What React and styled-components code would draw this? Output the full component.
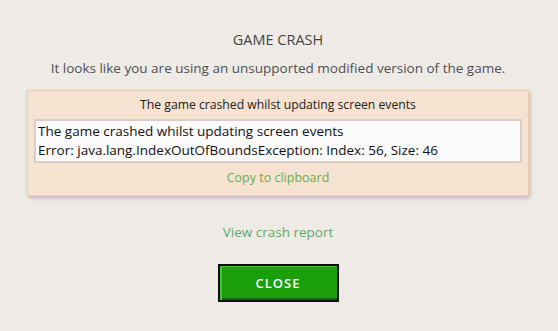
import React from "react";
import styled, { createGlobalStyle } from "styled-components";

const Global = createGlobalStyle`
  html, body { margin: 0; padding: 0; background: #eeebe6; }
  body { font-family: "Open Sans", "Noto Sans", sans-serif; }
`;

const Page = styled.div`
  width: 556px;
  height: 331px;
  box-sizing: border-box;
  padding-top: 30px;
  display: flex;
  flex-direction: column;
  align-items: center;
  background: #eeebe6;
`;

const Title = styled.h1`
  margin: 0;
  font-size: 14.5px;
  line-height: 20px;
  font-weight: 400;
  color: #444;
`;

const Subtitle = styled.p`
  margin: 8px 0 0;
  font-size: 13.5px;
  line-height: 20px;
  color: #4f4f55;
`;

const Panel = styled.section`
  margin-top: 12px;
  width: 502px;
  box-sizing: border-box;
  background: #f5e2d0;
  border: 1px solid #f3cfa9;
  box-shadow: 1px 2px 4px rgba(0, 0, 0, 0.22);
  padding: 5px 6px 7px;
  display: flex;
  flex-direction: column;
  align-items: center;
`;

const PanelHeader = styled.div`
  font-size: 12.2px;
  line-height: 18px;
  color: #222;
`;

const Details = styled.div`
  margin-top: 5px;
  align-self: stretch;
  background: #fbfbfb;
  border: 2px solid #d9cdc6;
  padding: 1px 2px 1px;
  font-size: 13.5px;
  line-height: 19px;
  color: #111;
`;

const Link = styled.a`
  color: ${(p) => p.$color};
  font-size: ${(p) => p.$size}px;
  line-height: 20px;
  text-decoration: none;
  cursor: pointer;
  margin-top: ${(p) => p.$mt}px;
`;

const CloseButton = styled.button`
  margin-top: 22px;
  width: 121px;
  height: 38px;
  box-sizing: border-box;
  border: 2px solid #0d0d0d;
  background: #1a9e0a;
  box-shadow: inset 2px 1px 0 #46c23a, inset 0 -2px 0 #0e6a08;
  color: #fff;
  font-family: "Open Sans", "Noto Sans", sans-serif;
  font-weight: 600;
  font-size: 13px;
  letter-spacing: 1px;
  cursor: pointer;
`;

export default function App() {
  return (
    <>
      <Global />
      <Page>
        <Title>GAME CRASH</Title>
        <Subtitle>
          It looks like you are using an unsupported modified version of the game.
        </Subtitle>
        <Panel>
          <PanelHeader>The game crashed whilst updating screen events</PanelHeader>
          <Details>
            The game crashed whilst updating screen events
            <br />
            Error: java.lang.IndexOutOfBoundsException: Index: 56, Size: 46
          </Details>
          <Link $color="#6cae4e" $size={12.5} $mt={5}>
            Copy to clipboard
          </Link>
        </Panel>
        <Link $color="#5faa68" $size={13.5} $mt={26}>
          View crash report
        </Link>
        <CloseButton>CLOSE</CloseButton>
      </Page>
    </>
  );
}
